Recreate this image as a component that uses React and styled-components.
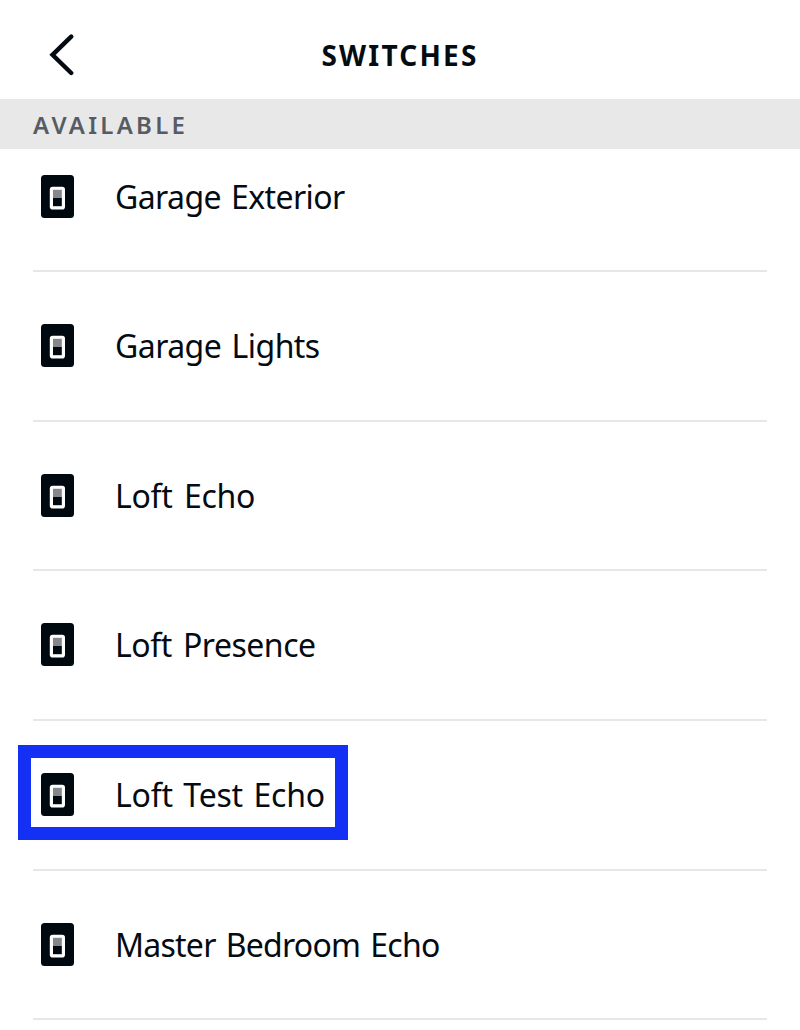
import React from 'react';
import styled, { createGlobalStyle } from 'styled-components';

const GlobalStyle = createGlobalStyle`
  * { box-sizing: border-box; }
  body { margin: 0; background: #fff; }
`;
const Screen = styled.main`
  width: 800px;
  height: 1030px;
  overflow: hidden;
  background: #fff;
  color: #050b12;
  font-family: "Noto Sans", sans-serif;
`;
const Header = styled.header`
  height: 99px;
  display: grid;
  grid-template-columns: 100px 1fr 100px;
  align-items: center;
  padding-top: 10px;
`;
const BackButton = styled.button`
  border: 0;
  padding: 0 0 0 49px;
  background: none;
  display: flex;
  svg { display: block; }
`;
const Title = styled.h1`
  margin: 0;
  text-align: center;
  font-size: 28px;
  line-height: 38px;
  font-weight: 700;
  letter-spacing: 2.2px;
  white-space: nowrap;
`;
const SectionLabel = styled.h2`
  margin: 0;
  height: 50px;
  padding-left: 33px;
  background: #e8e8e8;
  color: #565c63;
  font-size: 24px;
  line-height: 51px;
  font-weight: 600;
  letter-spacing: 3.25px;
`;
const List = styled.ul`
  list-style: none;
  margin: 0;
  padding: 0 33px;
`;
const Row = styled.li`
  position: relative;
  height: ${p => p.$first ? 123 : 149.7}px;
  padding: ${p => p.$first ? 25.5 : 52}px 0 0 8px;
  border-bottom: 2px solid #e7e7e7;
  display: flex;
  align-items: flex-start;
  svg { flex: none; }
`;
const Name = styled.span`
  margin-left: 41px;
  font-size: 32px;
  line-height: 44px;
  white-space: nowrap;
  letter-spacing: ${p => p.$tracking}px;
  word-spacing: ${p => p.$gap}px;
`;
const Highlight = styled.div`
  position: absolute;
  left: -15px;
  top: 23.5px;
  width: 330px;
  height: 95px;
  border: 13px solid #1430f5;
`;
const SwitchIcon = () => (
  <svg width="33" height="44" viewBox="0 0 33 44">
    <rect x="0" y="0" width="33" height="43" rx="3.5" fill="#000910" />
    <rect x="8.8" y="11.7" width="15.2" height="22.8" rx="2.8" fill="#fff" />
    <rect x="12" y="14.8" width="8.8" height="8.7" fill="#85878a" />
    <rect x="12" y="23" width="8.8" height="8.2" fill="#000910" />
  </svg>
);
const rows = [
  { name: 'Garage Exterior', tracking: -0.6, gap: 2.4 },
  { name: 'Garage Lights', tracking: -0.55, gap: 2.6 },
  { name: 'Loft Echo', tracking: -0.3, gap: 3.4 },
  { name: 'Loft Presence', tracking: -0.5, gap: 3.5 },
  { name: 'Loft Test Echo', tracking: -0.25, gap: 2.6, highlighted: true },
  { name: 'Master Bedroom Echo', tracking: -0.75, gap: 2.5 },
];
export default function App() {
  return (
    <Screen>
      <GlobalStyle />
      <Header>
        <BackButton aria-label="Back">
          <svg width="26" height="42" viewBox="0 0 26 42" fill="none" stroke="#050b12" strokeWidth="4.4" strokeLinecap="round" strokeLinejoin="miter">
            <path d="M22.2 2.6 3.5 20.8 22.2 39" />
          </svg>
        </BackButton>
        <Title>SWITCHES</Title>
      </Header>
      <SectionLabel>AVAILABLE</SectionLabel>
      <List>
        {rows.map((row, i) => (
          <Row key={row.name} $first={i === 0}>
            <SwitchIcon />
            <Name $tracking={row.tracking} $gap={row.gap}>{row.name}</Name>
            {row.highlighted && <Highlight />}
          </Row>
        ))}
      </List>
    </Screen>
  );
}
